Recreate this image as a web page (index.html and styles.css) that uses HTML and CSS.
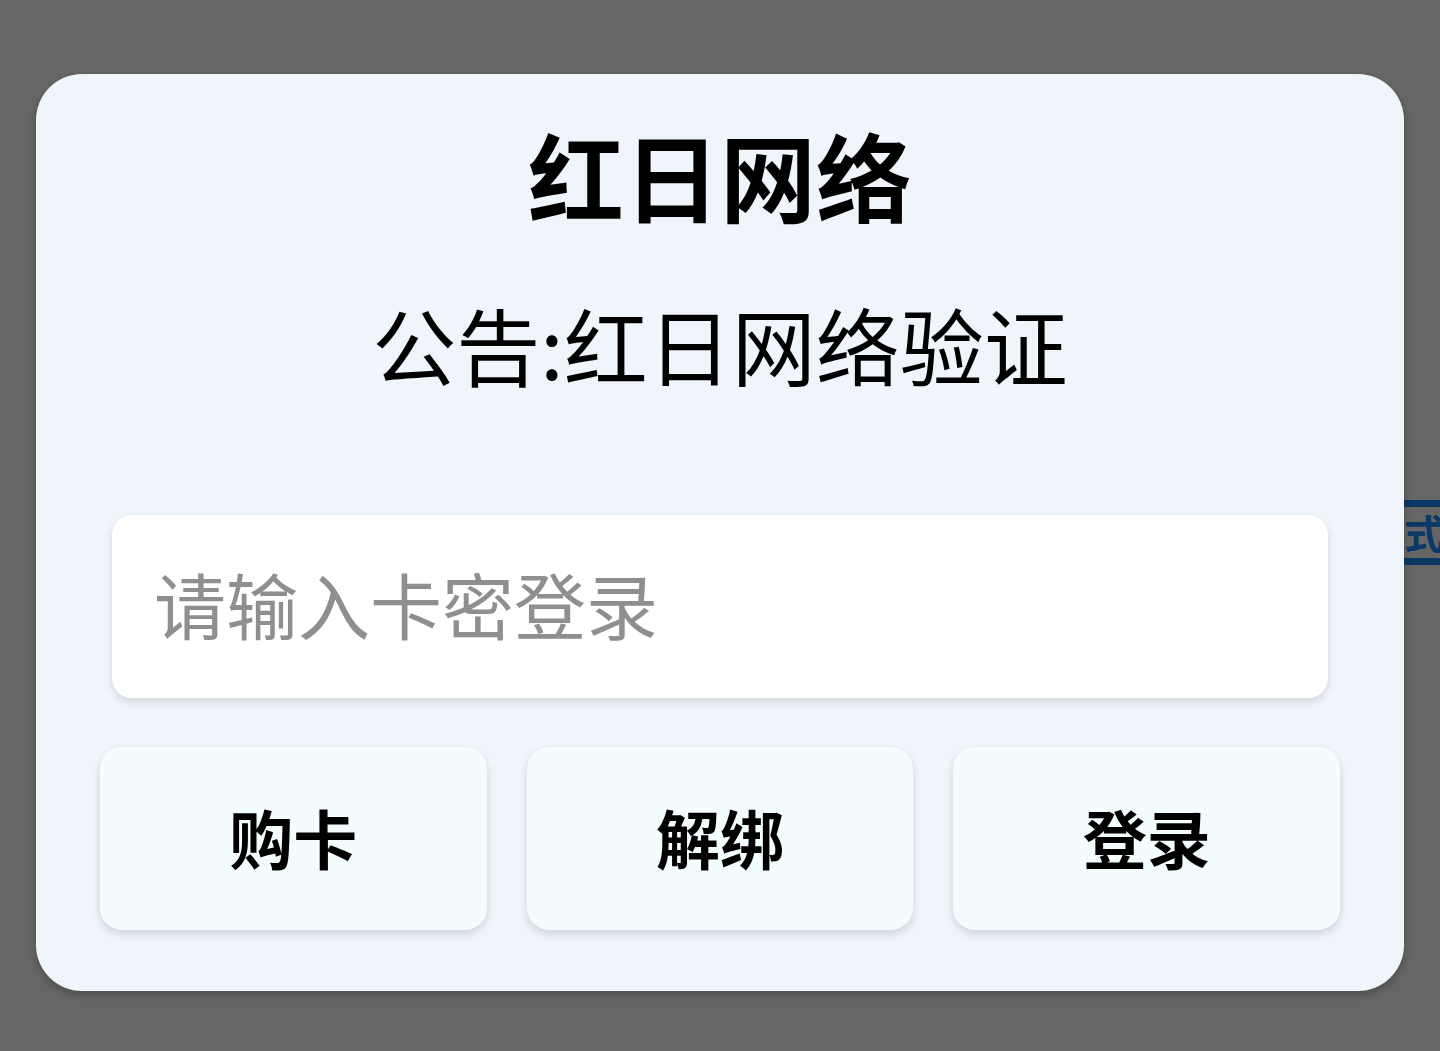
FILE: index.html
```html
<!DOCTYPE html>
<html lang="zh-CN">
<head>
<meta charset="utf-8">
<title>红日网络</title>
<link rel="stylesheet" href="styles.css">
</head>
<body>
<div class="page">
  <div class="side-btn">模式</div>
</div>
<div class="backdrop">
  <div class="dialog">
    <h1 class="title">红日网络</h1>
    <p class="notice">公告:红日网络验证</p>
    <input class="card-input" type="text" placeholder="请输入卡密登录">
    <div class="actions">
      <button class="action">购卡</button>
      <button class="action">解绑</button>
      <button class="action">登录</button>
    </div>
  </div>
</div>
</body>
</html>
```
FILE: styles.css
```css
html, body {
  margin: 0;
  padding: 0;
  width: 1440px;
  height: 1051px;
  overflow: hidden;
  font-family: "Noto Sans CJK SC", "Noto Sans", sans-serif;
}

.page {
  position: relative;
  width: 1440px;
  height: 1051px;
  background: #ffffff;
}

.side-btn {
  position: absolute;
  left: 1340px;
  top: 500px;
  width: 140px;
  height: 51px;
  border-top: 7px solid #1e8cff;
  border-bottom: 7px solid #1e8cff;
  color: #1e8cff;
  font-size: 40px;
  font-weight: 700;
  line-height: 51px;
  padding-left: 24px;
  box-sizing: content-box;
  white-space: nowrap;
}

.backdrop {
  position: fixed;
  inset: 0;
  background: rgba(0, 0, 0, 0.6);
  display: flex;
  justify-content: center;
  align-items: flex-start;
  padding-top: 74px;
  box-sizing: border-box;
}

.dialog {
  width: 1368px;
  height: 917px;
  box-sizing: border-box;
  background: #f0f5fc;
  border-radius: 46px;
  padding: 40px 64px 61px;
  display: flex;
  flex-direction: column;
  box-shadow: 0 4px 10px rgba(0, 0, 0, 0.25);
}

.title {
  margin: 0;
  text-align: center;
  font-size: 96px;
  font-weight: 700;
  line-height: 120px;
  color: #000;
}

.notice {
  margin: 60px 0 0;
  text-align: center;
  font-size: 84px;
  font-weight: 400;
  line-height: 100px;
  color: #000;
}

.card-input {
  margin: 121px 12px 0;
  height: 183px;
  box-sizing: border-box;
  border: none;
  outline: none;
  background: #ffffff;
  border-radius: 20px;
  padding: 0 0 8px 42px;
  font-family: inherit;
  font-size: 72px;
  color: #000;
  box-shadow: 0 4px 8px rgba(0, 0, 0, 0.12);
}

.card-input::placeholder {
  color: #8f8f8f;
}

.actions {
  margin-top: 49px;
  display: grid;
  grid-template-columns: repeat(3, 1fr);
  gap: 40px;
}

.action {
  height: 183px;
  border: none;
  border-radius: 22px;
  background: #f4fdfe;
  font-family: inherit;
  font-size: 64px;
  font-weight: 700;
  color: #000;
  padding: 0 0 6px;
  box-shadow: 0 4px 8px rgba(0, 0, 0, 0.14);
}
```
